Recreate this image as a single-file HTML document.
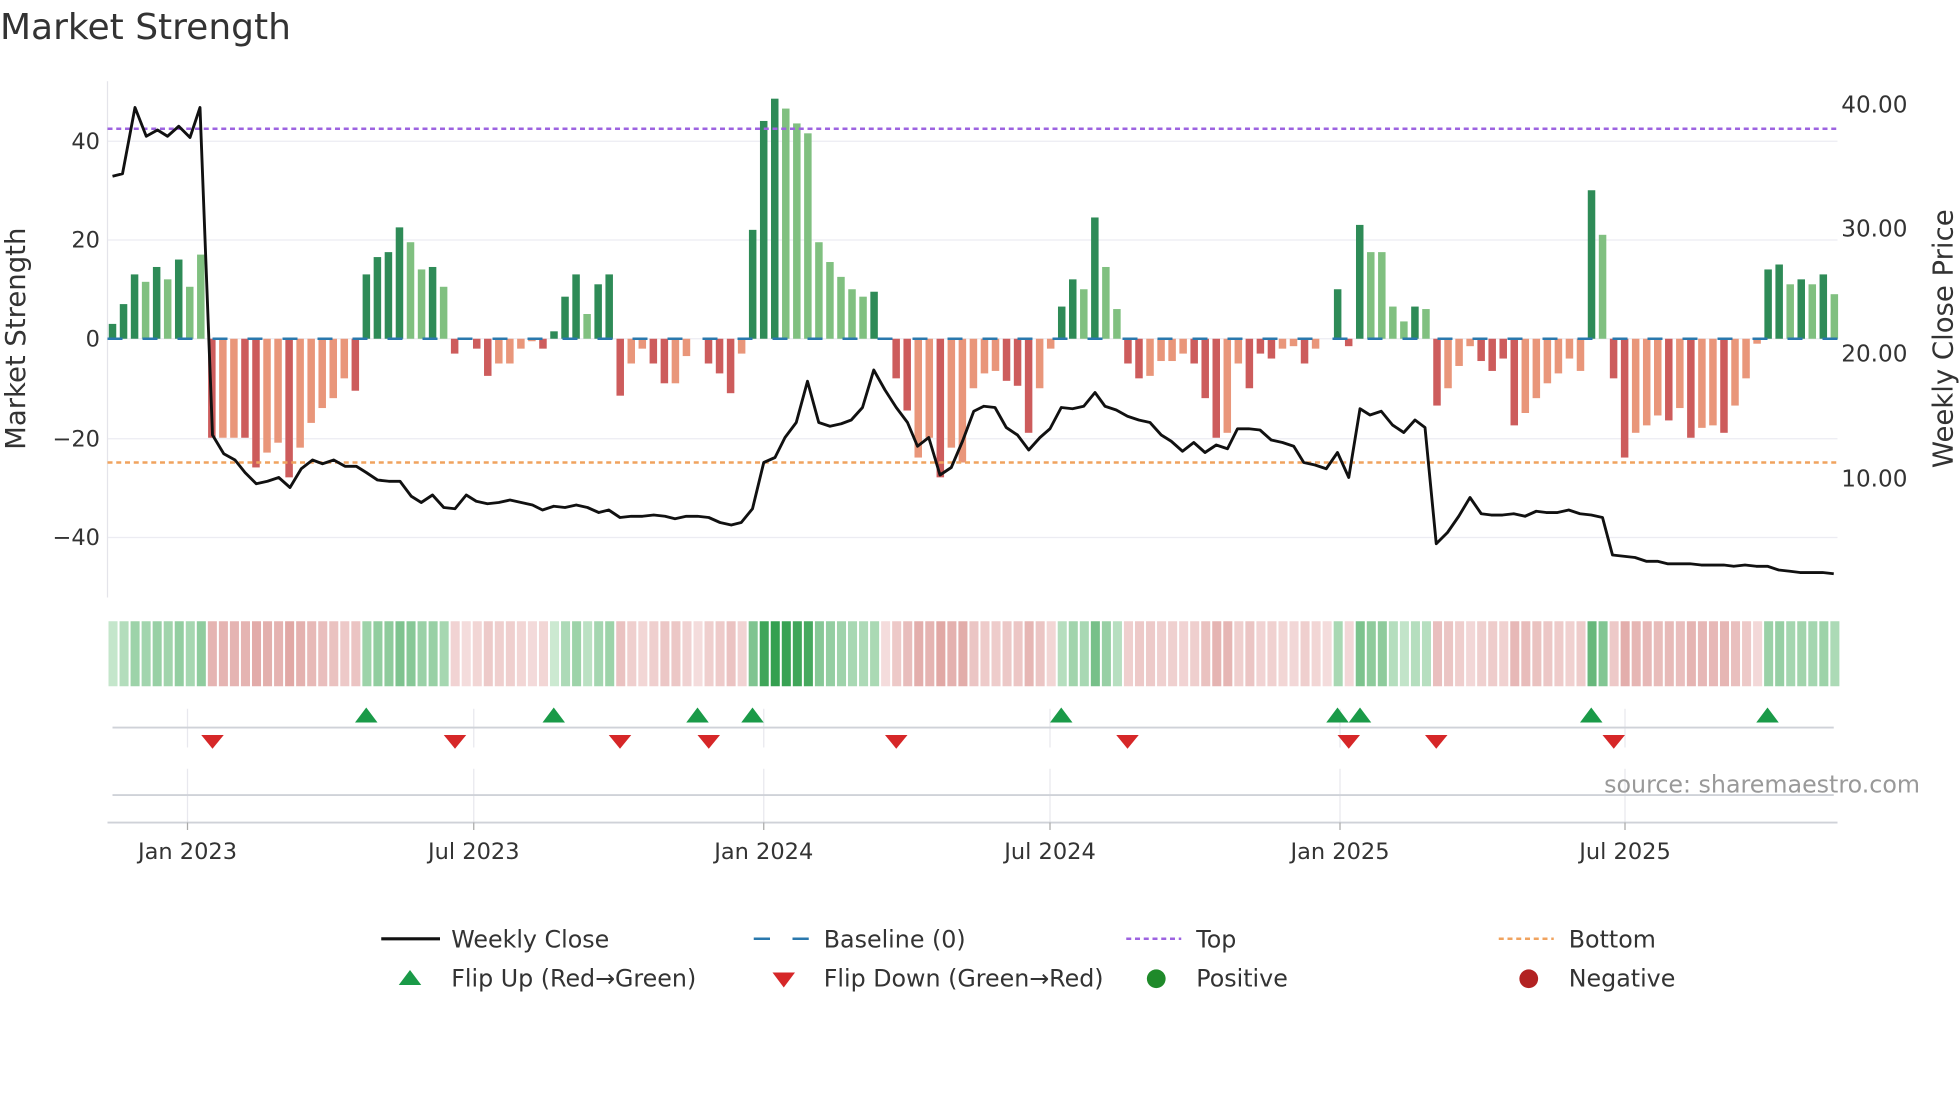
<!DOCTYPE html>
<html><head><meta charset="utf-8"><style>
html,body{margin:0;padding:0;background:#fff;}
svg{display:block;font-family:"DejaVu Sans","Liberation Sans",sans-serif;}
</style></head><body>
<svg id="s" width="1960" height="1102" viewBox="0 0 1568 881.6" xmlns="http://www.w3.org/2000/svg">
<rect width="1568" height="882" fill="#fff"/>
<text x="0" y="31" font-size="28.8" fill="#333">Market Strength</text>
<g stroke="#ececf2" stroke-width="1">
<line x1="86" y1="113" x2="1470" y2="113"/><line x1="86" y1="192" x2="1470" y2="192"/>
<line x1="86" y1="271" x2="1470" y2="271"/><line x1="86" y1="351" x2="1470" y2="351"/>
<line x1="86" y1="430" x2="1470" y2="430"/>
</g>
<line x1="86" y1="65" x2="86" y2="478" stroke="#e4e4ea"/>
<g font-size="18" fill="#333" text-anchor="end">
<text x="80" y="119">40</text><text x="80" y="198">20</text><text x="80" y="277">0</text>
<text x="80" y="357">−20</text><text x="80" y="436">−40</text>
</g>
<g font-size="18.5" fill="#333">
<text x="1473" y="90">40.00</text><text x="1473" y="189">30.00</text>
<text x="1473" y="289">20.00</text><text x="1473" y="389">10.00</text>
</g>
<text transform="translate(20,271) rotate(-90)" font-size="22" fill="#333" text-anchor="middle">Market Strength</text>
<text transform="translate(1562,271) rotate(-90)" font-size="22" fill="#333" text-anchor="middle">Weekly Close Price</text>
<g id="bars"></g>
<line x1="86" y1="271" x2="1470" y2="271" stroke="#2a78ad" stroke-width="2" stroke-dasharray="12 16"/>
<line x1="86" y1="103" x2="1470" y2="103" stroke="#9d63e0" stroke-width="2" stroke-dasharray="4 3"/>
<line x1="86" y1="370" x2="1470" y2="370" stroke="#f0a35f" stroke-width="2" stroke-dasharray="4 3"/>
<polyline id="price" fill="none" stroke="#111" stroke-width="2.3" stroke-linejoin="round"/>
<g id="heat"></g>
<g stroke="#e8e8ee">
<line x1="150" y1="567" x2="150" y2="598"/><line x1="379" y1="567" x2="379" y2="598"/><line x1="611" y1="567" x2="611" y2="598"/><line x1="840" y1="567" x2="840" y2="598"/><line x1="1072" y1="567" x2="1072" y2="598"/><line x1="1300" y1="567" x2="1300" y2="598"/>
<line x1="150" y1="615" x2="150" y2="658"/><line x1="379" y1="615" x2="379" y2="658"/><line x1="611" y1="615" x2="611" y2="658"/><line x1="840" y1="615" x2="840" y2="658"/><line x1="1072" y1="615" x2="1072" y2="658"/><line x1="1300" y1="615" x2="1300" y2="658"/>
</g>
<line x1="90" y1="582" x2="1467" y2="582" stroke="#cfd2d8" stroke-width="1.5"/>
<line x1="90" y1="636" x2="1467" y2="636" stroke="#cfd2d8" stroke-width="1.5"/>
<line x1="86" y1="658" x2="1470" y2="658" stroke="#cfd2d8" stroke-width="1.5"/>
<g stroke="#aaa"><line x1="150" y1="658" x2="150" y2="664"/><line x1="379" y1="658" x2="379" y2="664"/><line x1="611" y1="658" x2="611" y2="664"/><line x1="840" y1="658" x2="840" y2="664"/><line x1="1072" y1="658" x2="1072" y2="664"/><line x1="1300" y1="658" x2="1300" y2="664"/></g>
<g id="flips"></g>
<g font-size="18" fill="#333" text-anchor="middle">
<text x="150" y="687">Jan 2023</text><text x="379" y="687">Jul 2023</text><text x="611" y="687">Jan 2024</text>
<text x="840" y="687">Jul 2024</text><text x="1072" y="687">Jan 2025</text><text x="1300" y="687">Jul 2025</text>
</g>
<text x="1536" y="634" font-size="19" fill="#999" text-anchor="end">source: sharemaestro.com</text>
<g font-size="19" fill="#333">
<line x1="305" y1="751" x2="352" y2="751" stroke="#111" stroke-width="2.5"/><text x="361" y="758">Weekly Close</text>
<line x1="603" y1="751" x2="647" y2="751" stroke="#2a78ad" stroke-width="2" stroke-dasharray="13 18"/><text x="659" y="758">Baseline (0)</text>
<line x1="901" y1="751" x2="945" y2="751" stroke="#9d63e0" stroke-width="2" stroke-dasharray="4 3"/><text x="957" y="758">Top</text>
<line x1="1199" y1="751" x2="1243" y2="751" stroke="#f0a35f" stroke-width="2" stroke-dasharray="4 3"/><text x="1255" y="758">Bottom</text>
<polygon points="319,788 337,788 328,776" fill="#1a9a48"/><text x="361" y="789">Flip Up (Red→Green)</text>
<polygon points="618,778 636,778 627,790" fill="#d62728"/><text x="659" y="789">Flip Down (Green→Red)</text>
<circle cx="925" cy="783" r="7.5" fill="#1f8a2a"/><text x="957" y="789">Positive</text>
<circle cx="1223" cy="783" r="7.5" fill="#b22222"/><text x="1255" y="789">Negative</text>
</g>
</svg>
<script>
var V=[3,7,13,-11.5,14.5,-12,16,-10.5,-17,-20,20,20,-20,-26,23,21,-28,22,17,14,12,8,-10.5,13,16.5,17.5,22.5,-19.5,-14,14.5,-10.5,-3,0,-2,-7.5,5,5,2,0.5,-2,1.5,8.5,13,-5,11,13,-11.5,5,2,-5,-9,9,3.5,0,-5,-7,-11,3,22,44,48.5,-46.5,-43.5,-41.5,-19.5,-15.5,-12.5,-10,-8.5,9.5,0,-8,-14.5,24,20,-28,22,25,10,7,6.5,-8.5,-9.5,-19,10,2,6.5,12,-10,24.5,-14.5,-6,-5,-8,7.5,4.5,4.5,3,-5,-12,-20,19,5,-10,-3,-4,2,1.5,-5,2,0,10,-1.5,23,-17.5,-17.5,-6.5,-3.5,6.5,-6,-13.5,10,5.5,1.5,-4.5,-6.5,-4,-17.5,15,12,9,7,4,6.5,30,-21,-8,-24,19,17.5,15.5,-16.5,14,-20,18,17.5,-19,13.5,8,1,14,15,-11,12,-11,13,-9];
var runsPos=[[0,8],[23,30],[40,45],[58,69],[86,91],[111,111],[113,119],[134,135],[150,156]];
function isPos(i){for(var r of runsPos)if(i>=r[0]&&i<=r[1])return true;return false;}
var ns="http://www.w3.org/2000/svg",bars=document.getElementById('bars'),heat=document.getElementById('heat');
function el(t,a,p){var e=document.createElementNS(ns,t);for(var k in a)e.setAttribute(k,a[k]);p.appendChild(e);return e;}
var step=8.83;
for(var i=0;i<V.length;i++){
 var pos=isPos(i),raw=V[i],mag=Math.abs(raw),light;
 if(pos){light=raw<0;}else{light=raw>0;}
 if(i==112){pos=false;light=false;}
 var col=pos?(light?'#80c080':'#2e8b57'):(light?'#e9967a':'#cd5c5c');
 var x=90+i*step-3,h=mag*3.96;
 if(h>0)el('rect',{x:x,y:pos?271-h:271,width:6,height:h,fill:col},bars);
 var t=Math.min(mag/48,1);
 var c;
 if(pos){var a=[214,238,218],b=[52,160,80];c=a.map((v,k)=>Math.round(v+(b[k]-v)*Math.pow(t,0.8)));}
 else{var a=[244,220,220],b=[214,140,136];c=a.map((v,k)=>Math.round(v+(b[k]-v)*Math.pow(t,0.8)));}
 el('rect',{x:86+i*step+0.8,y:497,width:step-1.6,height:52,fill:'rgb('+c+')'},heat);
}
var P="90,141 98,139 108,86 117,109 126,104 134,109 143,101 152,110 160,86 170,348 179,363 188,368 196,378 205,387 214,385 223,382 232,390 241,375 250,368 258,371 267,368 276,373 285,373 293,378 302,384 311,385 320,385 329,397 337,402 346,396 355,406 364,407 373,396 381,401 390,403 399,402 408,400 417,402 426,404 434,408 443,405 452,406 461,404 470,406 479,410 487,408 496,414 505,413 514,413 523,412 532,413 540,415 549,413 558,413 567,414 576,418 585,420 593,418 602,407 611,370 620,366 628,350 637,338 646,305 655,338 664,341 673,339 681,336 690,326 699,296 708,312 717,326 726,338 734,357 743,350 752,380 761,374 770,353 779,329 787,325 796,326 805,342 814,348 823,360 832,350 840,343 849,326 858,327 867,325 876,314 884,325 893,328 902,333 911,336 920,338 929,348 937,353 946,361 955,354 964,362 973,356 982,359 990,343 999,343 1008,344 1017,352 1026,354 1035,357 1043,370 1052,372 1061,375 1070,362 1079,382 1088,327 1096,332 1105,329 1114,340 1123,346 1132,336 1140,342 1149,435 1158,426 1167,413 1176,398 1185,411 1193,412 1202,412 1211,411 1220,413 1229,409 1237,410 1246,410 1255,408 1264,411 1273,412 1282,414 1290,444 1299,445 1308,446 1317,449 1326,449 1334,451 1343,451 1352,451 1361,452 1370,452 1379,452 1387,453 1396,452 1405,453 1414,453 1423,456 1432,457 1440,458 1449,458 1458,458 1467,459";
document.getElementById('price').setAttribute('points',P);
var f=document.getElementById('flips');
[293,443,558,602,849,1070,1088,1273,1414].forEach(function(x){el('polygon',{points:(x-9)+',578 '+(x+9)+',578 '+x+',566',fill:'#1a9a48'},f);});
[170,364,496,567,717,902,1079,1149,1291].forEach(function(x){el('polygon',{points:(x-9)+',588 '+(x+9)+',588 '+x+',599',fill:'#d62728'},f);});
</script>
</body></html>
